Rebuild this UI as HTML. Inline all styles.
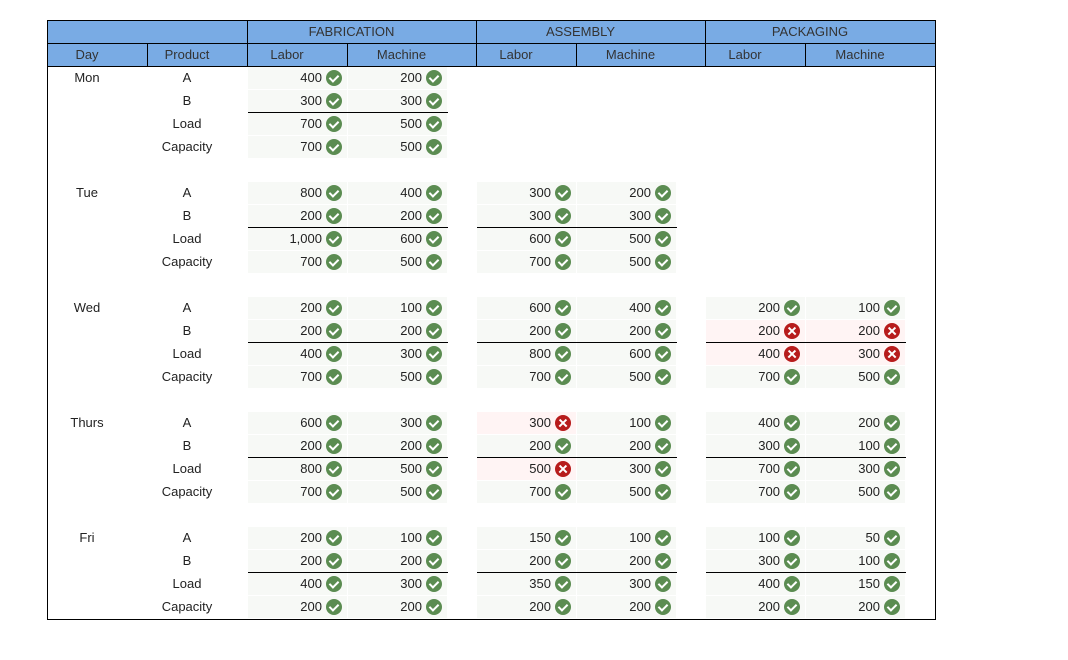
<!DOCTYPE html>
<html><head><meta charset="utf-8"><style>
*{box-sizing:border-box;margin:0;padding:0}
body{width:1068px;height:660px;background:#fff;font-family:"Liberation Sans",Arial,sans-serif;font-size:13px;color:#222;position:relative;overflow:hidden}
.tbl{position:absolute;left:47px;top:20px;width:889px;height:600px;border:1px solid #000;border-top:1px solid #000}
.h{position:absolute;background:#79abe4;border-right:1px solid #000;border-bottom:1px solid #000;text-align:center;line-height:22px;color:#333;padding-right:21px}
.r{position:absolute;height:23px;line-height:22px}
.t{position:absolute;width:100px;text-align:center;padding-right:22px}
.c{position:absolute;width:99px;height:22px;line-height:22px;background:#f7f9f6;text-align:right;padding-right:25px}
.c.bad{background:#fff4f4}
.c i{position:absolute;right:5px;top:3px;width:16px;height:16px;border-radius:50%;background:#5b8c51}
.c i::after{content:"";position:absolute;left:5px;top:3px;width:4px;height:7px;border-right:2px solid #fff;border-bottom:2px solid #fff;transform:rotate(45deg)}
.c.bad i{background:#b71c1c}
.c.bad i::after,.c.bad i::before{content:"";position:absolute;left:3px;top:7px;width:10px;height:2.4px;background:#fff;border:0;transform:rotate(45deg)}
.c.bad i::before{transform:rotate(-45deg)}
.ln{position:absolute;height:1px;background:#000;width:200px}
</style></head><body>
<div class="tbl">
<div class="h" style="left:0;top:0;width:200px;height:23px"></div>
<div class="h" style="left:200px;top:0;width:229px;height:23px">FABRICATION</div>
<div class="h" style="left:429px;top:0;width:229px;height:23px">ASSEMBLY</div>
<div class="h" style="left:658px;top:0;width:229px;height:23px;border-right:0">PACKAGING</div>
<div class="h" style="left:0;top:23px;width:100px;height:23px">Day</div>
<div class="h" style="left:100px;top:23px;width:100px;height:23px">Product</div>
<div class="h" style="left:200px;top:23px;width:100px;height:23px">Labor</div>
<div class="h" style="left:300px;top:23px;width:129px;height:23px">Machine</div>
<div class="h" style="left:429px;top:23px;width:100px;height:23px">Labor</div>
<div class="h" style="left:529px;top:23px;width:129px;height:23px">Machine</div>
<div class="h" style="left:658px;top:23px;width:100px;height:23px">Labor</div>
<div class="h" style="left:758px;top:23px;width:129px;height:23px;border-right:0">Machine</div>

<div class="r" style="top:46px"><div class="t" style="left:0">Mon</div><div class="t" style="left:100px">A</div></div>
<div class="r" style="top:69px"><div class="t" style="left:100px">B</div></div>
<div class="r" style="top:92px"><div class="t" style="left:100px">Load</div></div>
<div class="r" style="top:115px"><div class="t" style="left:100px">Capacity</div></div>
<div class="c" style="left:200px;top:46px">400<i></i></div><div class="c" style="left:300px;top:46px">200<i></i></div>
<div class="c" style="left:200px;top:69px">300<i></i></div><div class="c" style="left:300px;top:69px">300<i></i></div>
<div class="c" style="left:200px;top:92px">700<i></i></div><div class="c" style="left:300px;top:92px">500<i></i></div>
<div class="c" style="left:200px;top:115px">700<i></i></div><div class="c" style="left:300px;top:115px">500<i></i></div>
<div class="ln" style="left:200px;top:91px"></div>

<div class="r" style="top:161px"><div class="t" style="left:0">Tue</div><div class="t" style="left:100px">A</div></div>
<div class="r" style="top:184px"><div class="t" style="left:100px">B</div></div>
<div class="r" style="top:207px"><div class="t" style="left:100px">Load</div></div>
<div class="r" style="top:230px"><div class="t" style="left:100px">Capacity</div></div>
<div class="c" style="left:200px;top:161px">800<i></i></div><div class="c" style="left:300px;top:161px">400<i></i></div>
<div class="c" style="left:200px;top:184px">200<i></i></div><div class="c" style="left:300px;top:184px">200<i></i></div>
<div class="c" style="left:200px;top:207px">1,000<i></i></div><div class="c" style="left:300px;top:207px">600<i></i></div>
<div class="c" style="left:200px;top:230px">700<i></i></div><div class="c" style="left:300px;top:230px">500<i></i></div>
<div class="c" style="left:429px;top:161px">300<i></i></div><div class="c" style="left:529px;top:161px">200<i></i></div>
<div class="c" style="left:429px;top:184px">300<i></i></div><div class="c" style="left:529px;top:184px">300<i></i></div>
<div class="c" style="left:429px;top:207px">600<i></i></div><div class="c" style="left:529px;top:207px">500<i></i></div>
<div class="c" style="left:429px;top:230px">700<i></i></div><div class="c" style="left:529px;top:230px">500<i></i></div>
<div class="ln" style="left:200px;top:206px"></div><div class="ln" style="left:429px;top:206px"></div>

<div class="r" style="top:276px"><div class="t" style="left:0">Wed</div><div class="t" style="left:100px">A</div></div>
<div class="r" style="top:299px"><div class="t" style="left:100px">B</div></div>
<div class="r" style="top:322px"><div class="t" style="left:100px">Load</div></div>
<div class="r" style="top:345px"><div class="t" style="left:100px">Capacity</div></div>
<div class="c" style="left:200px;top:276px">200<i></i></div><div class="c" style="left:300px;top:276px">100<i></i></div>
<div class="c" style="left:200px;top:299px">200<i></i></div><div class="c" style="left:300px;top:299px">200<i></i></div>
<div class="c" style="left:200px;top:322px">400<i></i></div><div class="c" style="left:300px;top:322px">300<i></i></div>
<div class="c" style="left:200px;top:345px">700<i></i></div><div class="c" style="left:300px;top:345px">500<i></i></div>
<div class="c" style="left:429px;top:276px">600<i></i></div><div class="c" style="left:529px;top:276px">400<i></i></div>
<div class="c" style="left:429px;top:299px">200<i></i></div><div class="c" style="left:529px;top:299px">200<i></i></div>
<div class="c" style="left:429px;top:322px">800<i></i></div><div class="c" style="left:529px;top:322px">600<i></i></div>
<div class="c" style="left:429px;top:345px">700<i></i></div><div class="c" style="left:529px;top:345px">500<i></i></div>
<div class="c" style="left:658px;top:276px">200<i></i></div><div class="c" style="left:758px;top:276px">100<i></i></div>
<div class="c bad" style="left:658px;top:299px">200<i></i></div><div class="c bad" style="left:758px;top:299px">200<i></i></div>
<div class="c bad" style="left:658px;top:322px">400<i></i></div><div class="c bad" style="left:758px;top:322px">300<i></i></div>
<div class="c" style="left:658px;top:345px">700<i></i></div><div class="c" style="left:758px;top:345px">500<i></i></div>
<div class="ln" style="left:200px;top:321px"></div><div class="ln" style="left:429px;top:321px"></div><div class="ln" style="left:658px;top:321px"></div>

<div class="r" style="top:391px"><div class="t" style="left:0">Thurs</div><div class="t" style="left:100px">A</div></div>
<div class="r" style="top:414px"><div class="t" style="left:100px">B</div></div>
<div class="r" style="top:437px"><div class="t" style="left:100px">Load</div></div>
<div class="r" style="top:460px"><div class="t" style="left:100px">Capacity</div></div>
<div class="c" style="left:200px;top:391px">600<i></i></div><div class="c" style="left:300px;top:391px">300<i></i></div>
<div class="c" style="left:200px;top:414px">200<i></i></div><div class="c" style="left:300px;top:414px">200<i></i></div>
<div class="c" style="left:200px;top:437px">800<i></i></div><div class="c" style="left:300px;top:437px">500<i></i></div>
<div class="c" style="left:200px;top:460px">700<i></i></div><div class="c" style="left:300px;top:460px">500<i></i></div>
<div class="c bad" style="left:429px;top:391px">300<i></i></div><div class="c" style="left:529px;top:391px">100<i></i></div>
<div class="c" style="left:429px;top:414px">200<i></i></div><div class="c" style="left:529px;top:414px">200<i></i></div>
<div class="c bad" style="left:429px;top:437px">500<i></i></div><div class="c" style="left:529px;top:437px">300<i></i></div>
<div class="c" style="left:429px;top:460px">700<i></i></div><div class="c" style="left:529px;top:460px">500<i></i></div>
<div class="c" style="left:658px;top:391px">400<i></i></div><div class="c" style="left:758px;top:391px">200<i></i></div>
<div class="c" style="left:658px;top:414px">300<i></i></div><div class="c" style="left:758px;top:414px">100<i></i></div>
<div class="c" style="left:658px;top:437px">700<i></i></div><div class="c" style="left:758px;top:437px">300<i></i></div>
<div class="c" style="left:658px;top:460px">700<i></i></div><div class="c" style="left:758px;top:460px">500<i></i></div>
<div class="ln" style="left:200px;top:436px"></div><div class="ln" style="left:429px;top:436px"></div><div class="ln" style="left:658px;top:436px"></div>

<div class="r" style="top:506px"><div class="t" style="left:0">Fri</div><div class="t" style="left:100px">A</div></div>
<div class="r" style="top:529px"><div class="t" style="left:100px">B</div></div>
<div class="r" style="top:552px"><div class="t" style="left:100px">Load</div></div>
<div class="r" style="top:575px"><div class="t" style="left:100px">Capacity</div></div>
<div class="c" style="left:200px;top:506px">200<i></i></div><div class="c" style="left:300px;top:506px">100<i></i></div>
<div class="c" style="left:200px;top:529px">200<i></i></div><div class="c" style="left:300px;top:529px">200<i></i></div>
<div class="c" style="left:200px;top:552px">400<i></i></div><div class="c" style="left:300px;top:552px">300<i></i></div>
<div class="c" style="left:200px;top:575px">200<i></i></div><div class="c" style="left:300px;top:575px">200<i></i></div>
<div class="c" style="left:429px;top:506px">150<i></i></div><div class="c" style="left:529px;top:506px">100<i></i></div>
<div class="c" style="left:429px;top:529px">200<i></i></div><div class="c" style="left:529px;top:529px">200<i></i></div>
<div class="c" style="left:429px;top:552px">350<i></i></div><div class="c" style="left:529px;top:552px">300<i></i></div>
<div class="c" style="left:429px;top:575px">200<i></i></div><div class="c" style="left:529px;top:575px">200<i></i></div>
<div class="c" style="left:658px;top:506px">100<i></i></div><div class="c" style="left:758px;top:506px">50<i></i></div>
<div class="c" style="left:658px;top:529px">300<i></i></div><div class="c" style="left:758px;top:529px">100<i></i></div>
<div class="c" style="left:658px;top:552px">400<i></i></div><div class="c" style="left:758px;top:552px">150<i></i></div>
<div class="c" style="left:658px;top:575px">200<i></i></div><div class="c" style="left:758px;top:575px">200<i></i></div>
<div class="ln" style="left:200px;top:551px"></div><div class="ln" style="left:429px;top:551px"></div><div class="ln" style="left:658px;top:551px"></div>
</div>
</body></html>
